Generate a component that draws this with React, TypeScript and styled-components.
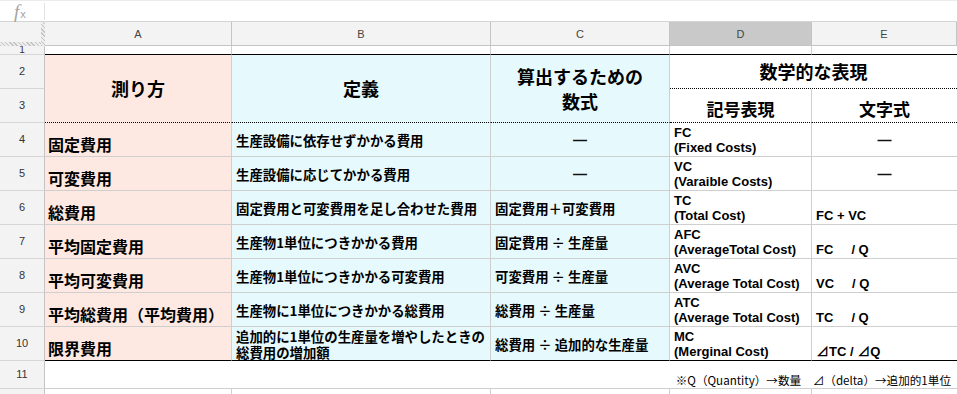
import React from "react";
import styled, { createGlobalStyle } from "styled-components";

const GlobalStyle = createGlobalStyle`
  html, body {
    margin: 0;
    padding: 0;
    background: #ffffff;
    overflow: hidden;
  }
  body {
    font-family: "Liberation Sans", Arial, sans-serif;
    color: #000;
  }
`;

const JP = `"Noto Sans CJK JP", "Noto Sans", sans-serif`;
const LATIN = `"Liberation Sans", "Noto Sans CJK JP", sans-serif`;

type Edge = "grid" | "dotted" | "black" | "none";
type HAlign = "left" | "center" | "right";
type VAlign = "top" | "center" | "bottom";

const edge = (e: Edge = "grid") => {
  if (e === "dotted") return "1px dotted #000";
  if (e === "black") return "1px solid #000";
  if (e === "none") return "none";
  return "1px solid #cfcfcf";
};

const vMap = { top: "flex-start", center: "center", bottom: "flex-end" };
const hMap = { left: "flex-start", center: "center", right: "flex-end" };

// Styled Components
const Page = styled.div`
  width: 957px;
  height: 394px;
  overflow: hidden;
`;

const FormulaBar = styled.div`
  display: flex;
  align-items: center;
  height: 22px;
  box-sizing: border-box;
  border-bottom: 1px solid #d4d4d4;
  border-top: 1px solid #ececec;
`;

const FxLabel = styled.div`
  width: 45px;
  height: 17px;
  box-sizing: border-box;
  padding-left: 14px;
  display: flex;
  align-items: flex-end;
  border-right: 1px solid #e2e2e2;
  font-family: "Liberation Serif", serif;
  font-style: italic;
  font-size: 19px;
  line-height: 17px;
  color: #a3a3a3;
`;

const FxSub = styled.span`
  font-family: "Liberation Sans", sans-serif;
  font-style: normal;
  font-size: 11px;
  line-height: 11px;
  margin-left: 1px;
`;

const Sheet = styled.div`
  display: grid;
  grid-template-columns: 45px 187px 259px 179px 142px 145px;
  grid-template-rows: 24px 9px repeat(9, 34px) 28px 34px;
`;

const Corner = styled.div`
  box-sizing: border-box;
  background:
    repeating-linear-gradient(45deg, #c4c4c4 0 1px, #ececec 1px 3px) right top / 4px 100% no-repeat,
    repeating-linear-gradient(45deg, #c4c4c4 0 1px, #ececec 1px 3px) left bottom / 100% 4px no-repeat,
    #f3f3f3;
`;

const ColHead = styled.div<{ $selected?: boolean }>`
  box-sizing: border-box;
  display: flex;
  align-items: center;
  justify-content: center;
  background: ${(p) => (p.$selected ? "#c9c9c9" : "#f3f3f3")};
  border-right: 1px solid #c4c4c4;
  border-bottom: 1px solid #c4c4c4;
  font-family: "Liberation Sans", sans-serif;
  font-size: 11px;
  color: #444;
`;

const RowHead = styled.div<{ $small?: boolean }>`
  box-sizing: border-box;
  display: flex;
  align-items: center;
  justify-content: center;
  background: #f3f3f3;
  border-right: 1px solid #c4c4c4;
  border-bottom: 1px solid #d6d6d6;
  font-family: "Liberation Sans", sans-serif;
  font-size: ${(p) => (p.$small ? "10px" : "11px")};
  line-height: ${(p) => (p.$small ? "8px" : "11px")};
  color: #333;
  overflow: hidden;
`;

const Cell = styled.div<{
  $bg?: string;
  $h?: HAlign;
  $v?: VAlign;
  $bottom?: Edge;
  $right?: Edge;
  $rows?: number;
  $cols?: number;
}>`
  box-sizing: border-box;
  display: flex;
  flex-direction: column;
  justify-content: ${(p) => vMap[p.$v ?? "center"]};
  align-items: ${(p) => hMap[p.$h ?? "left"]};
  text-align: ${(p) => p.$h ?? "left"};
  grid-row: span ${(p) => p.$rows ?? 1};
  grid-column: span ${(p) => p.$cols ?? 1};
  background: ${(p) => p.$bg ?? "#ffffff"};
  border-right: ${(p) => edge(p.$right)};
  border-bottom: ${(p) => edge(p.$bottom)};
  padding: 0 3px;
  overflow: hidden;
  white-space: pre;
`;

const Title = styled(Cell)`
  font-family: ${JP};
  font-weight: 700;
  font-size: 18px;
  line-height: 25px;
`;

const SubTitle = styled(Cell)`
  font-family: ${JP};
  font-weight: 700;
  font-size: 17px;
  line-height: 20px;
  padding-bottom: 3px;
`;

const NameCell = styled(Cell)`
  font-family: ${JP};
  font-weight: 700;
  font-size: 16px;
  line-height: 20px;
  padding-bottom: 2px;
`;

const TextCell = styled(Cell)`
  font-family: ${JP};
  font-weight: 700;
  font-size: 13.4px;
  line-height: 16px;
  padding-left: 4px;
`;

const SymbolCell = styled(Cell)`
  font-family: ${LATIN};
  font-weight: 700;
  font-size: 13px;
  line-height: 15px;
  padding-bottom: 1px;
  padding-left: 4px;
`;

const DashCell = styled(Cell)`
  font-family: "Liberation Sans", sans-serif;
  font-weight: 700;
  font-size: 14px;
  line-height: 16px;
  color: #111;
`;

const NoteCell = styled(Cell)`
  font-family: ${JP};
  font-size: 11.6px;
  line-height: 16px;
  padding-right: 6px;
`;

const PINK = "#fde9e2";
const CYAN = "#e6f9fd";
const DASH = "—";

const rows = [
  {
    n: 4,
    name: "固定費用",
    def: "生産設備に依存せずかかる費用",
    formula: DASH,
    sym: "FC\n(Fixed Costs)",
    expr: DASH,
  },
  {
    n: 5,
    name: "可変費用",
    def: "生産設備に応じてかかる費用",
    formula: DASH,
    sym: "VC\n(Varaible Costs)",
    expr: DASH,
  },
  {
    n: 6,
    name: "総費用",
    def: "固定費用と可変費用を足し合わせた費用",
    formula: "固定費用＋可変費用",
    sym: "TC\n(Total Cost)",
    expr: "FC + VC",
  },
  {
    n: 7,
    name: "平均固定費用",
    def: "生産物1単位につきかかる費用",
    formula: "固定費用 ÷ 生産量",
    sym: "AFC\n(AverageTotal Cost)",
    expr: "FC     / Q",
  },
  {
    n: 8,
    name: "平均可変費用",
    def: "生産物1単位につきかかる可変費用",
    formula: "可変費用 ÷ 生産量",
    sym: "AVC\n(Average Total Cost)",
    expr: "VC     / Q",
  },
  {
    n: 9,
    name: "平均総費用（平均費用）",
    def: "生産物に1単位につきかかる総費用",
    formula: "総費用 ÷ 生産量",
    sym: "ATC\n(Average Total Cost)",
    expr: "TC     / Q",
  },
  {
    n: 10,
    name: "限界費用",
    def: "追加的に1単位の生産量を増やしたときの\n総費用の増加額",
    formula: "総費用 ÷ 追加的な生産量",
    sym: "MC\n(Merginal Cost)",
    expr: "⊿TC / ⊿Q",
  },
];

export default function App() {
  return (
    <Page>
      <GlobalStyle />
      <FormulaBar>
        <FxLabel>
          f<FxSub>x</FxSub>
        </FxLabel>
      </FormulaBar>
      <Sheet>
        <Corner />
        {["A", "B", "C", "D", "E"].map((c) => (
          <ColHead key={c} $selected={c === "D"}>
            {c}
          </ColHead>
        ))}

        <RowHead $small>1</RowHead>
        {[0, 1, 2, 3, 4].map((i) => (
          <Cell key={i} $bottom="black" $right={i === 4 ? "none" : "grid"} />
        ))}

        <RowHead>2</RowHead>
        <Title $rows={2} $bg={PINK} $h="center" $bottom="dotted">
          測り方
        </Title>
        <Title $rows={2} $bg={CYAN} $h="center" $bottom="dotted">
          定義
        </Title>
        <Title $rows={2} $bg={CYAN} $h="center" $bottom="dotted">
          {"算出するための\n数式"}
        </Title>
        <Title $cols={2} $h="center" $bottom="dotted" $right="none">
          数学的な表現
        </Title>

        <RowHead>3</RowHead>
        <SubTitle $h="center" $v="bottom" $bottom="dotted">
          記号表現
        </SubTitle>
        <SubTitle $h="center" $v="bottom" $bottom="dotted" $right="none">
          文字式
        </SubTitle>

        {rows.map((r, i) => {
          const last = i === rows.length - 1;
          const bottom: Edge = last ? "black" : "grid";
          return (
            <React.Fragment key={r.n}>
              <RowHead>{r.n}</RowHead>
              <NameCell $bg={PINK} $v="bottom" $bottom={bottom}>
                {r.name}
              </NameCell>
              <TextCell $bg={CYAN} $bottom={bottom}>
                {r.def}
              </TextCell>
              {r.formula === DASH ? (
                <DashCell $bg={CYAN} $h="center" $bottom={bottom}>
                  {DASH}
                </DashCell>
              ) : (
                <TextCell $bg={CYAN} $bottom={bottom}>
                  {r.formula}
                </TextCell>
              )}
              <SymbolCell $v="bottom" $bottom={bottom}>
                {r.sym}
              </SymbolCell>
              {r.expr === DASH ? (
                <DashCell $h="center" $bottom={bottom} $right="none">
                  {DASH}
                </DashCell>
              ) : (
                <SymbolCell $v="bottom" $bottom={bottom} $right="none">
                  {r.expr}
                </SymbolCell>
              )}
            </React.Fragment>
          );
        })}

        <RowHead>11</RowHead>
        <NoteCell $cols={5} $h="right" $v="bottom" $right="none">
          ※Q（Quantity）→数量　⊿（delta）→追加的1単位
        </NoteCell>

        <RowHead>12</RowHead>
        {[0, 1, 2, 3, 4].map((i) => (
          <Cell key={i} $right={i === 4 ? "none" : "grid"} />
        ))}
      </Sheet>
    </Page>
  );
}
